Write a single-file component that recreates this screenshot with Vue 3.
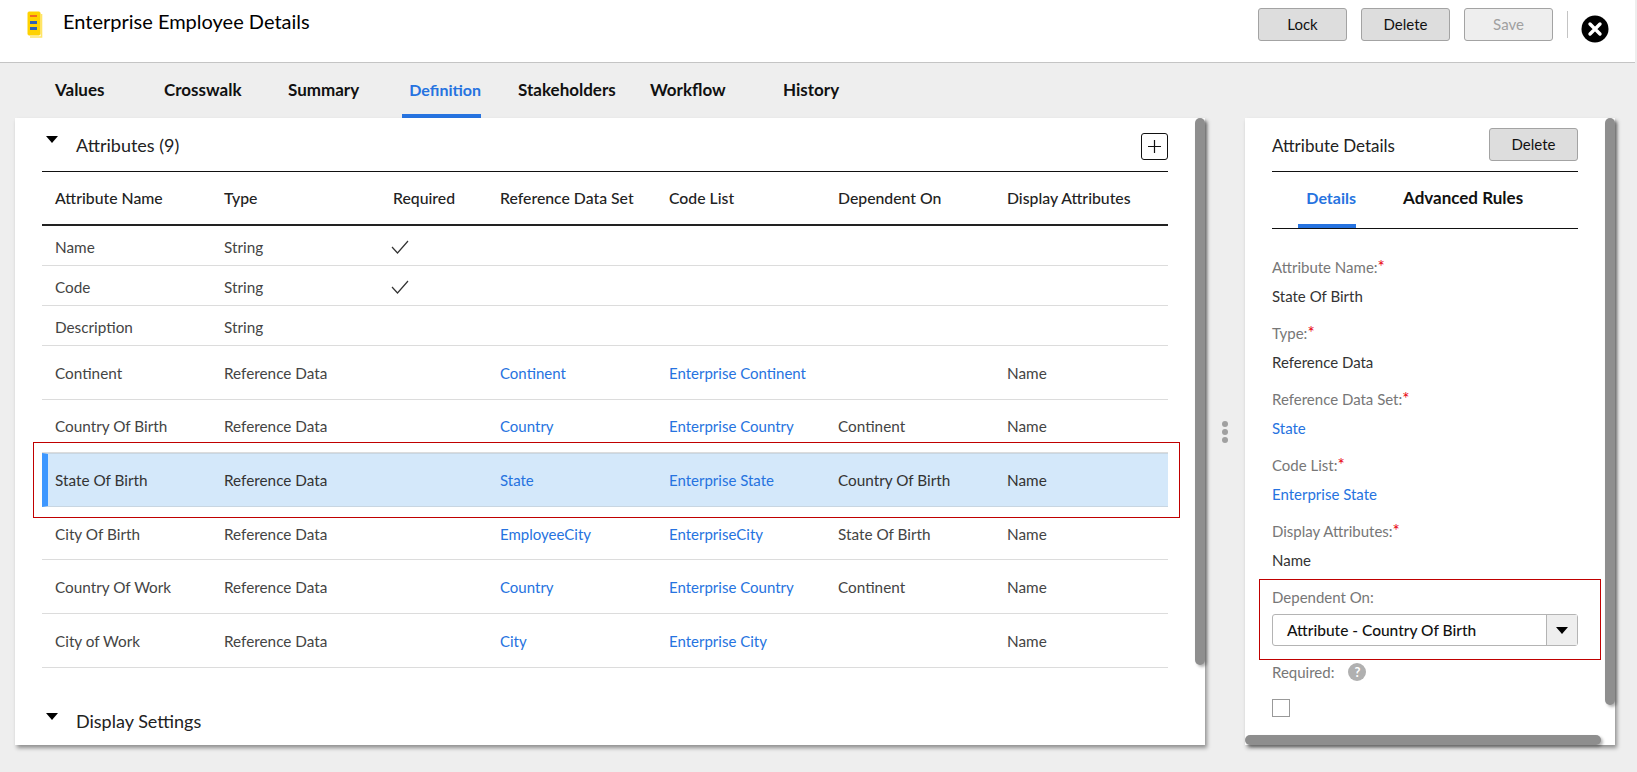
<script setup>
// attribute rows shown in the definition table
const columns = ['Attribute Name', 'Type', 'Required', 'Reference Data Set', 'Code List', 'Dependent On', 'Display Attributes']

const rows = [
  { name: 'Name', type: 'String', required: true },
  { name: 'Code', type: 'String', required: true },
  { name: 'Description', type: 'String' },
  { name: 'Continent', type: 'Reference Data', set: 'Continent', list: 'Enterprise Continent', display: 'Name', tall: true },
  { name: 'Country Of Birth', type: 'Reference Data', set: 'Country', list: 'Enterprise Country', dep: 'Continent', display: 'Name', tall: true },
  { name: 'State Of Birth', type: 'Reference Data', set: 'State', list: 'Enterprise State', dep: 'Country Of Birth', display: 'Name', tall: true, selected: true },
  { name: 'City Of Birth', type: 'Reference Data', set: 'EmployeeCity', list: 'EnterpriseCity', dep: 'State Of Birth', display: 'Name', tall: true },
  { name: 'Country Of Work', type: 'Reference Data', set: 'Country', list: 'Enterprise Country', dep: 'Continent', display: 'Name', tall: true },
  { name: 'City of Work', type: 'Reference Data', set: 'City', list: 'Enterprise City', display: 'Name', tall: true }
]

const tabs = ['Values', 'Crosswalk', 'Summary', 'Definition', 'Stakeholders', 'Workflow', 'History']

const fields = [
  { label: 'Attribute Name:', value: 'State Of Birth' },
  { label: 'Type:', value: 'Reference Data' },
  { label: 'Reference Data Set:', value: 'State', link: true },
  { label: 'Code List:', value: 'Enterprise State', link: true },
  { label: 'Display Attributes:', value: 'Name' }
]
</script>

<template>
  <div class="page">
    <header class="top">
      <svg class="doc-icon" width="16" height="27" viewBox="0 0 16 27">
        <path d="M14.5 3v23H3" fill="none" stroke="#ffe566" stroke-width="1.6" />
        <rect x="1" y="1" width="12" height="23" rx="1" fill="#ffd200" stroke="#ffd200" />
        <rect x="3" y="4" width="7" height="2" fill="#f26b21" />
        <rect x="3" y="10" width="7" height="3" fill="#2f5fb5" />
        <rect x="3" y="16" width="7" height="3" fill="#2f5fb5" />
      </svg>
      <h1 class="title">Enterprise Employee Details</h1>
      <div class="top-actions">
        <button class="btn">Lock</button>
        <button class="btn">Delete</button>
        <button class="btn disabled">Save</button>
        <span class="divider"></span>
        <svg class="close" width="28" height="28" viewBox="0 0 28 28">
          <circle cx="14" cy="14" r="13.5" fill="#000" />
          <path d="M9 9l10 10M19 9L9 19" stroke="#fff" stroke-width="3.4" stroke-linecap="round" />
        </svg>
      </div>
    </header>

    <nav class="tabs">
      <a v-for="tab in tabs" :key="tab" class="tab" :class="['tab-' + tab.toLowerCase(), { active: tab === 'Definition' }]">{{ tab }}</a>
    </nav>

    <main class="body">
      <section class="panel left">
        <div class="section-head">
          <span class="caret"></span>
          <span class="section-title">Attributes (9)</span>
          <span class="add">
            <svg width="13" height="13" viewBox="0 0 13 13"><path d="M6.5 0v13M0 6.5h13" stroke="#111" stroke-width="1.2" /></svg>
          </span>
        </div>

        <div class="grid-row head-row">
          <div v-for="col in columns" :key="col">{{ col }}</div>
        </div>
        <div
          v-for="row in rows"
          :key="row.name"
          class="grid-row"
          :class="{ tall: row.tall, selected: row.selected }"
        >
          <div>{{ row.name }}</div>
          <div>{{ row.type }}</div>
          <div>
            <svg v-if="row.required" class="check" width="18" height="14" viewBox="0 0 18 14">
              <path d="M1 7l5.5 6L17 1" fill="none" stroke="#333" stroke-width="1.2" />
            </svg>
          </div>
          <div class="link">{{ row.set }}</div>
          <div class="link">{{ row.list }}</div>
          <div>{{ row.dep }}</div>
          <div>{{ row.display }}</div>
          <span v-if="row.selected" class="callout callout-row"></span>
        </div>

        <div class="section-head bottom-head">
          <span class="caret"></span>
          <span class="section-title">Display Settings</span>
        </div>
        <span class="scroll-v scroll-left"></span>
      </section>

      <div class="handle"><i></i><i></i><i></i></div>

      <aside class="panel right">
        <div class="detail-head">
          <span class="section-title">Attribute Details</span>
          <button class="btn">Delete</button>
        </div>
        <div class="detail-tabs">
          <a class="tab active">Details</a>
          <a class="tab">Advanced Rules</a>
        </div>
        <div class="fields">
          <div v-for="f in fields" :key="f.label" class="field">
            <div class="label">{{ f.label }}<em>*</em></div>
            <div class="value" :class="{ link: f.link }">{{ f.value }}</div>
          </div>
        </div>
        <div class="dependent">
          <div class="label">Dependent On:</div>
          <div class="select">
            <span class="select-text">Attribute - Country Of Birth</span>
            <span class="select-arrow"><span class="caret"></span></span>
          </div>
          <span class="callout callout-field"></span>
        </div>
        <div class="required-line">
          <span class="label">Required:</span>
          <span class="help">?</span>
        </div>
        <span class="checkbox"></span>
        <span class="scroll-v scroll-right"></span>
        <span class="scroll-h"></span>
      </aside>
    </main>
  </div>
</template>

<style scoped>
.page {
  width: 1637px;
  height: 772px;
  overflow: hidden;
  background: #eeeeee;
  font-family: Lato, "Liberation Sans", sans-serif;
  font-size: 15px;
  color: #444;
}

.top {
  display: flex;
  align-items: flex-start;
  width: 1635px;
  height: 63px;
  box-sizing: border-box;
  background: #fff;
  border-bottom: 1px solid #c4c4c4;
  padding: 9px 0 0 27px;
}

.doc-icon {
  flex-shrink: 0;
  margin-top: 2px;
}

.title {
  margin: 0 0 0 20px;
  font-size: 20px;
  line-height: 24px;
  font-weight: 400;
  color: #000;
}

.top-actions {
  margin-left: auto;
  margin-top: -1px;
  display: flex;
  align-items: flex-start;
  gap: 14px;
  padding-right: 26px;
}

.btn {
  width: 89px;
  height: 33px;
  box-sizing: border-box;
  padding: 0 0 2px;
  background: #dddddd;
  border: 1px solid #a3a3a3;
  border-radius: 3px;
  font: inherit;
  font-size: 15px;
  color: #111;
}

.btn.disabled {
  background: #eeeeee;
  color: #a0a0a0;
}

.divider {
  width: 1px;
  height: 27px;
  margin-top: 3px;
  background: #c4c4c4;
}

.close {
  margin: 7px 0 0 -1px;
}

.tabs {
  display: flex;
  height: 55px;
  padding-left: 47px;
}

.tab {
  display: block;
  box-sizing: border-box;
  padding-top: 17px;
  font-weight: 700;
  font-size: 17px;
  line-height: 20px;
  color: #111;
  border-bottom: 4px solid transparent;
}

.tab.active {
  color: #2673e0;
  border-bottom-color: #2673e0;
  font-size: 16px;
}

.tabs .tab {
  height: 55px;
  padding-left: 8px;
}

.tab-values { width: 109px; }
.tab-crosswalk { width: 124px; }
.tab-summary { width: 122px; }
.tabs .tab-definition { width: 79px; margin-right: 29px; padding-left: 0; text-align: right; }
.tab-stakeholders { width: 132px; }
.tab-workflow { width: 133px; }

.body {
  display: flex;
  padding-left: 15px;
}

.panel {
  position: relative;
  height: 627px;
  box-sizing: border-box;
  background: #fff;
  box-shadow: 2px 3px 4px rgba(0, 0, 0, 0.4);
}

.panel.left {
  width: 1190px;
  padding: 0 37px 0 27px;
}

.section-head {
  display: flex;
  align-items: center;
  height: 53px;
  border-bottom: 1px solid #111;
  position: relative;
}

.bottom-head {
  margin-top: 27px;
  border-bottom: none;
}

.caret {
  display: inline-block;
  width: 0;
  height: 0;
  border-left: 6px solid transparent;
  border-right: 6px solid transparent;
  border-top: 7px solid #000;
}

.section-head .caret {
  margin: -10px 0 0 4px;
}

.section-title {
  font-size: 17px;
  margin-top: 2px;
  color: #222;
}

.section-head .section-title {
  margin-top: 0;
  margin-left: 18px;
  font-size: 18px;
}

.add {
  margin-left: auto;
  display: flex;
  align-items: center;
  justify-content: center;
  width: 27px;
  height: 27px;
  box-sizing: border-box;
  border: 1px solid #111;
  border-radius: 3px;
  margin-top: 4px;
}

.grid-row {
  position: relative;
  display: grid;
  grid-template-columns: 169px 169px 107px 169px 169px 169px 1fr;
  align-items: center;
  height: 40px;
  box-sizing: border-box;
  padding: 3px 0 0 13px;
  border-bottom: 1px solid #dcdcdc;
  font-size: 15.3px;
}

.grid-row.tall {
  height: 53.6px;
  padding-top: 1px;
}

.head-row {
  height: 54px;
  padding: 0 0 2px 13px;
  border-bottom: 2px solid #222;
  font-size: 15.8px;
  font-weight: 500;
  color: #222;
}

.grid-row.selected {
  background: #d4e8fa;
  border-bottom-color: #c8d6e2;
  border-top: 1px solid #c8d6e2;
  border-left: 6px solid #3d97ff;
  padding: 0 0 0 7px;
  color: #333;
}

.check {
  display: block;
  margin-left: -2px;
}

.link {
  color: #2673e0;
  font-size: 15px;
}

.callout {
  position: absolute;
  border: 1px solid #c00000;
  pointer-events: none;
}

.callout-row {
  left: -15px;
  right: -12px;
  top: -12px;
  bottom: -12px;
}

.callout-field {
  left: -13px;
  right: -23px;
  top: 0;
  bottom: 0;
}

.scroll-v {
  position: absolute;
  top: 0;
  right: 0;
  width: 10px;
  background: #8e8e8e;
  border-radius: 5px;
  box-shadow: 2px 2px 3px rgba(0, 0, 0, 0.3);
}

.scroll-left {
  height: 547px;
}

.handle {
  display: flex;
  flex-direction: column;
  align-items: center;
  gap: 2px;
  width: 40px;
  padding-top: 303px;
}

.handle i {
  width: 6px;
  height: 6px;
  border-radius: 50%;
  background: #a0a0a0;
}

.panel.right {
  width: 370px;
  padding: 0 37px 0 27px;
}

.detail-head {
  display: flex;
  align-items: center;
  justify-content: space-between;
  height: 53px;
  border-bottom: 1px solid #111;
}

.detail-tabs {
  display: flex;
  height: 57px;
  border-bottom: 1px solid #111;
  padding-left: 26px;
  box-sizing: border-box;
}

.detail-tabs .tab {
  height: 56px;
  padding-top: 16px;
}

.detail-tabs .tab.active {
  width: 58px;
  margin-right: 47px;
  text-align: right;
}

.fields {
  padding-top: 28px;
}

.field {
  height: 66px;
}

.label {
  line-height: 20px;
  color: #777;
}

.label em {
  color: #e8000d;
  font-style: normal;
  font-size: 17px;
  line-height: 0;
}

.value {
  margin-top: 8.5px;
  line-height: 20px;
  color: #333;
}

.value.link {
  color: #2673e0;
}

.dependent {
  position: relative;
  height: 81px;
  box-sizing: border-box;
  padding-top: 8px;
  margin-top: -8px;
}

.select {
  display: flex;
  height: 32px;
  box-sizing: border-box;
  margin-top: 7px;
  border: 1px solid #b4b4b4;
  border-radius: 3px;
}

.select-text {
  flex: 1;
  padding-left: 14px;
  line-height: 30px;
  font-size: 15.5px;
  font-weight: 500;
  color: #111;
}

.select-arrow {
  display: flex;
  align-items: center;
  justify-content: center;
  width: 30px;
  background: #eeeeee;
  border-left: 1px solid #b4b4b4;
}

.required-line {
  display: flex;
  align-items: center;
  gap: 14px;
  margin-top: 2px;
}

.help {
  width: 18px;
  height: 18px;
  border-radius: 50%;
  background: #b0b0b0;
  color: #fff;
  font-size: 13px;
  font-weight: 700;
  line-height: 18px;
  text-align: center;
}

.checkbox {
  display: block;
  width: 18px;
  height: 18px;
  box-sizing: border-box;
  margin-top: 17px;
  border: 1px solid #999;
}

.scroll-right {
  height: 587px;
}

.scroll-h {
  position: absolute;
  left: 0;
  right: 14px;
  bottom: 0;
  height: 10px;
  background: #8e8e8e;
  border-radius: 5px;
  box-shadow: 2px 2px 3px rgba(0, 0, 0, 0.3);
}
</style>

<style>
body {
  background: #eeeeee;
}
</style>
